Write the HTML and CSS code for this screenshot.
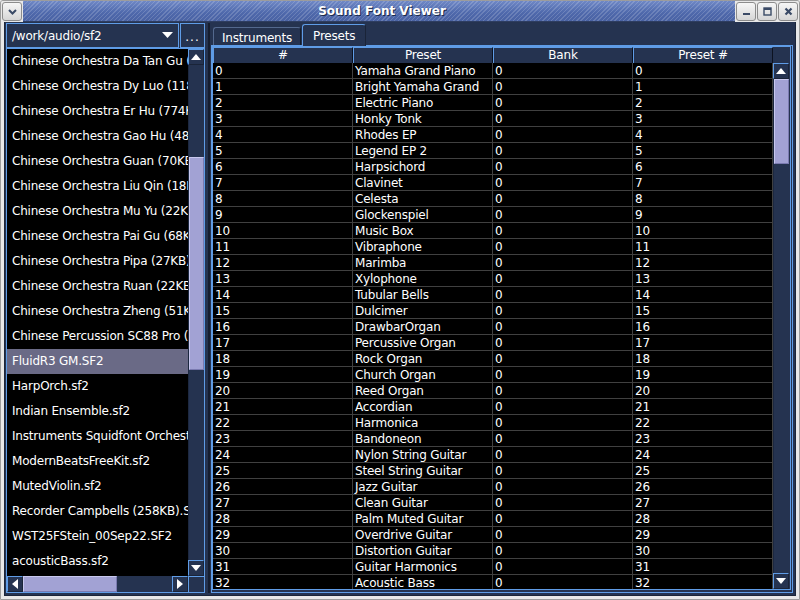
FILE: index.html
```html
<!DOCTYPE html>
<html>
<head>
<meta charset="utf-8">
<title>Sound Font Viewer</title>
<link rel="stylesheet" href="styles.css">
</head>
<body>
<div class="window">
  <div class="titlebar">
    <div class="tb-side">
      <div class="tb-btn"><svg width="13" height="13" viewBox="0 0 13 13"><path d="M3 5 L6.5 8.5 L10 5" fill="none" stroke="#3a4a66" stroke-width="2"/></svg></div>
    </div>
    <div class="tb-hatch"><span class="title">Sound Font Viewer</span></div>
    <div class="tb-side">
      <div class="tb-btn"><svg width="13" height="13" viewBox="0 0 13 13"><rect x="3" y="8" width="7" height="2" fill="#3a4a66"/></svg></div>
      <div class="tb-btn"><svg width="13" height="13" viewBox="0 0 13 13"><rect x="3" y="3" width="7" height="7" fill="none" stroke="#3a4a66" stroke-width="1.4"/><rect x="3" y="3" width="7" height="2" fill="#3a4a66"/></svg></div>
      <div class="tb-btn"><svg width="13" height="13" viewBox="0 0 13 13"><path d="M3.5 3.5 L9.5 9.5 M9.5 3.5 L3.5 9.5" stroke="#3a4a66" stroke-width="2.2"/></svg></div>
    </div>
  </div>
  <div class="content">
    <div class="leftpane">
      <div class="combo-row">
        <div class="combo"><span class="combo-text">/work/audio/sf2</span><svg class="combo-arrow" width="11" height="7" viewBox="0 0 11 7"><path d="M0 0 H11 L5.5 6 Z" fill="#fff"/></svg></div>
        <div class="browse">...</div>
      </div>
      <div class="listpane">
        <div class="list">
          <div class="li">Chinese Orchestra Da Tan Gu (32KB).sf2</div>
          <div class="li">Chinese Orchestra Dy Luo (118KB).sf2</div>
          <div class="li">Chinese Orchestra Er Hu (774KB).sf2</div>
          <div class="li">Chinese Orchestra Gao Hu (48KB).sf2</div>
          <div class="li">Chinese Orchestra Guan (70KB).sf2</div>
          <div class="li">Chinese Orchestra Liu Qin (18KB).sf2</div>
          <div class="li">Chinese Orchestra Mu Yu (22KB).sf2</div>
          <div class="li">Chinese Orchestra Pai Gu (68KB).sf2</div>
          <div class="li">Chinese Orchestra Pipa (27KB).sf2</div>
          <div class="li">Chinese Orchestra Ruan (22KB).sf2</div>
          <div class="li">Chinese Orchestra Zheng (51KB).sf2</div>
          <div class="li">Chinese Percussion SC88 Pro (94KB).sf2</div>
          <div class="li sel">FluidR3 GM.SF2</div>
          <div class="li">HarpOrch.sf2</div>
          <div class="li">Indian Ensemble.sf2</div>
          <div class="li">Instruments Squidfont Orchestra.sf2</div>
          <div class="li">ModernBeatsFreeKit.sf2</div>
          <div class="li">MutedViolin.sf2</div>
          <div class="li">Recorder Campbells (258KB).SF2</div>
          <div class="li">WST25FStein_00Sep22.SF2</div>
          <div class="li">acousticBass.sf2</div>
          <div class="li">bassoon.sf2</div>
        </div>
        <div class="vscroll">
          <div class="sbtn"><svg width="10" height="6" viewBox="0 0 10 6"><path d="M0 6 H10 L5 0 Z" fill="#fff"/></svg></div>
          <div class="track"><div class="thumb list-thumb"></div></div>
          <div class="sbtn"><svg width="10" height="6" viewBox="0 0 10 6"><path d="M0 0 H10 L5 6 Z" fill="#fff"/></svg></div>
        </div>
        <div class="hscroll">
          <div class="sbtn"><svg width="6" height="10" viewBox="0 0 6 10"><path d="M6 0 V10 L0 5 Z" fill="#fff"/></svg></div>
          <div class="htrack"><div class="hthumb"></div></div>
          <div class="sbtn"><svg width="6" height="10" viewBox="0 0 6 10"><path d="M0 0 V10 L6 5 Z" fill="#fff"/></svg></div>
        </div>
        <div class="corner"></div>
      </div>
    </div>
    <div class="splitter"><div class="split-line"></div></div>
    <div class="rightpane">
      <div class="tabs">
        <div class="tab">Instruments</div>
        <div class="tab active">Presets</div>
      </div>
      <div class="tabpanel">
        <div class="scrollpane">
          <div class="thead">
            <div class="th">#</div><div class="th">Preset</div><div class="th">Bank</div><div class="th">Preset #</div>
          </div>
          <div class="hcorner"></div>
          <div class="tbody">
            <div class="tr"><span>0</span><span>Yamaha Grand Piano</span><span>0</span><span>0</span></div>
            <div class="tr"><span>1</span><span>Bright Yamaha Grand</span><span>0</span><span>1</span></div>
            <div class="tr"><span>2</span><span>Electric Piano</span><span>0</span><span>2</span></div>
            <div class="tr"><span>3</span><span>Honky Tonk</span><span>0</span><span>3</span></div>
            <div class="tr"><span>4</span><span>Rhodes EP</span><span>0</span><span>4</span></div>
            <div class="tr"><span>5</span><span>Legend EP 2</span><span>0</span><span>5</span></div>
            <div class="tr"><span>6</span><span>Harpsichord</span><span>0</span><span>6</span></div>
            <div class="tr"><span>7</span><span>Clavinet</span><span>0</span><span>7</span></div>
            <div class="tr"><span>8</span><span>Celesta</span><span>0</span><span>8</span></div>
            <div class="tr"><span>9</span><span>Glockenspiel</span><span>0</span><span>9</span></div>
            <div class="tr"><span>10</span><span>Music Box</span><span>0</span><span>10</span></div>
            <div class="tr"><span>11</span><span>Vibraphone</span><span>0</span><span>11</span></div>
            <div class="tr"><span>12</span><span>Marimba</span><span>0</span><span>12</span></div>
            <div class="tr"><span>13</span><span>Xylophone</span><span>0</span><span>13</span></div>
            <div class="tr"><span>14</span><span>Tubular Bells</span><span>0</span><span>14</span></div>
            <div class="tr"><span>15</span><span>Dulcimer</span><span>0</span><span>15</span></div>
            <div class="tr"><span>16</span><span>DrawbarOrgan</span><span>0</span><span>16</span></div>
            <div class="tr"><span>17</span><span>Percussive Organ</span><span>0</span><span>17</span></div>
            <div class="tr"><span>18</span><span>Rock Organ</span><span>0</span><span>18</span></div>
            <div class="tr"><span>19</span><span>Church Organ</span><span>0</span><span>19</span></div>
            <div class="tr"><span>20</span><span>Reed Organ</span><span>0</span><span>20</span></div>
            <div class="tr"><span>21</span><span>Accordian</span><span>0</span><span>21</span></div>
            <div class="tr"><span>22</span><span>Harmonica</span><span>0</span><span>22</span></div>
            <div class="tr"><span>23</span><span>Bandoneon</span><span>0</span><span>23</span></div>
            <div class="tr"><span>24</span><span>Nylon String Guitar</span><span>0</span><span>24</span></div>
            <div class="tr"><span>25</span><span>Steel String Guitar</span><span>0</span><span>25</span></div>
            <div class="tr"><span>26</span><span>Jazz Guitar</span><span>0</span><span>26</span></div>
            <div class="tr"><span>27</span><span>Clean Guitar</span><span>0</span><span>27</span></div>
            <div class="tr"><span>28</span><span>Palm Muted Guitar</span><span>0</span><span>28</span></div>
            <div class="tr"><span>29</span><span>Overdrive Guitar</span><span>0</span><span>29</span></div>
            <div class="tr"><span>30</span><span>Distortion Guitar</span><span>0</span><span>30</span></div>
            <div class="tr"><span>31</span><span>Guitar Harmonics</span><span>0</span><span>31</span></div>
            <div class="tr"><span>32</span><span>Acoustic Bass</span><span>0</span><span>32</span></div>
          </div>
          <div class="vscroll">
            <div class="sbtn"><svg width="10" height="6" viewBox="0 0 10 6"><path d="M0 6 H10 L5 0 Z" fill="#fff"/></svg></div>
            <div class="track"><div class="thumb table-thumb"></div></div>
            <div class="sbtn"><svg width="10" height="6" viewBox="0 0 10 6"><path d="M0 0 H10 L5 6 Z" fill="#fff"/></svg></div>
          </div>
        </div>
      </div>
    </div>
  </div>
</div>
</body>
</html>
```

FILE: styles.css
```css
* { box-sizing: border-box; margin: 0; padding: 0; }
html, body { width: 800px; height: 600px; overflow: hidden; background: #e6e6e6; }
body { font-family: "DejaVu Sans", "Liberation Sans", sans-serif; font-size: 12px; letter-spacing: -0.2px; color: #fff; }

.window {
  width: 800px; height: 600px;
  display: flex; flex-direction: column;
  background: #e8e8e8;
  border: 1px solid #9c9c9c;
  border-radius: 3px 3px 0 0;
  padding: 0 3px 3px 3px;
  overflow: hidden;
}

.titlebar {
  flex: none;
  height: 21px; margin: 0 -3px;
  display: flex; align-items: stretch;
}
.tb-side { flex: none; display: flex; align-items: center; gap: 1px; padding: 0 1px; background: #e8e8e8; }
.tb-btn {
  flex: none;
  width: 20px; height: 19px;
  display: flex; align-items: center; justify-content: center;
  background: linear-gradient(#f6f6f6, #d6d6d6);
  border: 1px solid #8c8c8c;
  border-radius: 3px;
}
.tb-hatch {
  flex: 1;
  display: flex; align-items: center; justify-content: center;
  background:
    repeating-linear-gradient(135deg, rgba(255,255,255,0.16) 0 1px, rgba(255,255,255,0) 1px 3px),
    linear-gradient(#6f88c6, #4e68ab 60%, #4a63a4);
  border-bottom: 1px solid #2e3d60;
}
.title {
  font-weight: bold; font-size: 12px; color: #fff; letter-spacing: 0;
  text-shadow: 1px 1px 0 #1c2a4a;
  padding-left: 6px;
}

.content {
  flex: 1; min-height: 0;
  display: flex;
  background: #253350;
  border: 1px solid #1a2438;
  border-top: none;
  padding: 1px 2px 2px 1px;
}

.leftpane { flex: none; width: 199px; display: flex; flex-direction: column; min-height: 0; }
.combo-row { flex: none; height: 25px; display: flex; gap: 1px; }
.combo {
  width: 173px;
  border: 1px solid #5f9ce6;
  display: flex; align-items: center; justify-content: space-between;
  padding: 0 5px 0 5px;
  background: #253350;
}
.browse {
  flex: 1;
  border: 1px solid #5f9ce6;
  display: flex; align-items: flex-end; justify-content: center;
  padding-bottom: 3px;
  letter-spacing: 1px;
}

.listpane {
  flex: 1; min-height: 0;
  border: 1px solid #5f9ce6;
  display: grid;
  grid-template-columns: minmax(0, 1fr) 16px;
  grid-template-rows: minmax(0, 1fr) 16px;
  background: #000;
}
.list { overflow: hidden; background: #000; min-height: 0; }
.li {
  height: 25px; line-height: 24px;
  padding-left: 5px;
  white-space: nowrap; overflow: hidden;
  color: #fff;
}
.li.sel { background: #6a6a86; }

.vscroll {
  display: flex; flex-direction: column;
  background: #253350;
  min-height: 0;
}
.sbtn {
  width: 16px; height: 16px; flex: none;
  display: flex; align-items: center; justify-content: center;
  background: #253350;
  border: 1px solid #5f9ce6;
  border-right-color: #1a2438; border-bottom-color: #1a2438;
}
.track {
  flex: 1; min-height: 0;
  background: #253350;
  border-left: 1px solid #1c2840;
}
.thumb {
  background: #a2a2d4;
  border: 1px solid #c8c8ee;
  border-right-color: #7a7ab0; border-bottom-color: #7a7ab0;
}
.list-thumb { margin-top: 92px; height: 213px; }
.table-thumb { margin-top: 0; height: 85px; }

.hscroll { display: flex; background: #253350; }
.htrack { flex: 1; background: #253350; }
.hthumb {
  width: 94px; height: 16px;
  background: #a2a2d4;
  border: 1px solid #c8c8ee;
  border-right-color: #7a7ab0; border-bottom-color: #7a7ab0;
}
.corner { background: #253350; border-left: 1px solid #5f9ce6; border-top: 1px solid #5f9ce6; }

.splitter { flex: none; width: 6px; display: flex; justify-content: flex-end; padding-right: 1px; }
.split-line { width: 2px; background: #161e30; }

.rightpane { flex: 1; min-width: 0; display: flex; flex-direction: column; min-height: 0; }
.tabs { flex: none; height: 22px; display: flex; align-items: flex-end; padding-left: 2px; gap: 1px; }
.tab {
  height: 18px; padding: 2px 8px 0;
  display: flex; align-items: center;
  background: #253350;
  border: 1px solid #54698e;
  border-bottom: none;
  border-right-color: #141c2c;
  border-radius: 3px 3px 0 0;
}
.tab.active {
  height: 22px; margin-bottom: -1px;
  border-color: #5f9ce6;
  border-right-color: #1a2438;
  padding: 1px 10px 0;
  position: relative; z-index: 1;
}

.tabpanel {
  flex: 1; min-height: 0;
  border: 1px solid #5f9ce6;
  padding: 0 1px 2px 0;
  display: flex;
}
.scrollpane {
  flex: 1; min-height: 0;
  border: 1px solid #5f9ce6;
  display: grid;
  grid-template-columns: 560px 16px;
  grid-template-rows: 16px minmax(0, 1fr);
  overflow: hidden;
}
.thead { display: grid; grid-template-columns: repeat(4, 140px); background: #253350; }
.th {
  height: 16px; line-height: 14px;
  text-align: center;
  border-top: 1px solid #5f9ce6;
  border-left: 1px solid #5f9ce6;
  border-right: 1px solid #0c1220;
}
.hcorner { background: #253350; }
.tbody { background: #000; overflow: hidden; min-height: 0; }
.tr {
  display: grid; grid-template-columns: repeat(4, 140px);
  height: 16px;
}
.tr span {
  height: 16px; line-height: 16px;
  padding-left: 2px;
  border-right: 1px solid #404040;
  border-bottom: 1px solid #404040;
  white-space: nowrap; overflow: hidden;
}
```
